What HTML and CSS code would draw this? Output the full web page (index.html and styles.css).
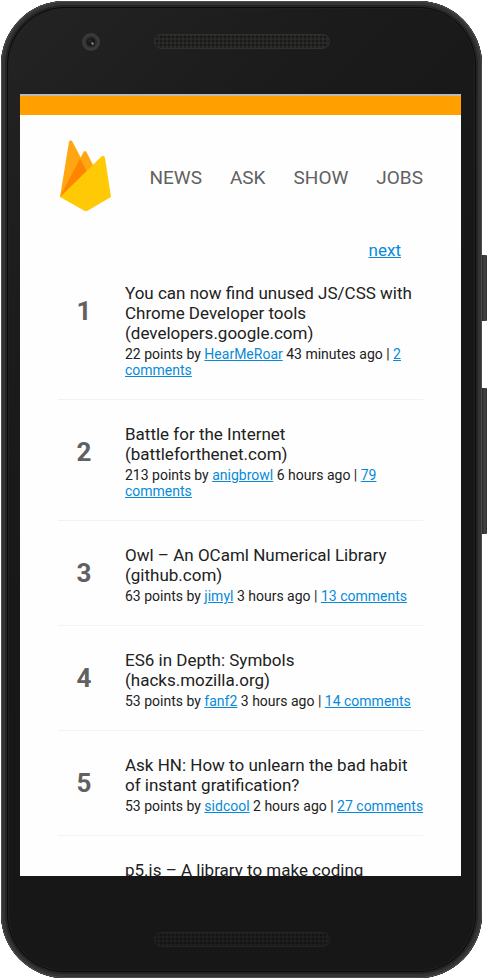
FILE: index.html
```html
<!DOCTYPE html>
<html lang="en">
<head>
<meta charset="utf-8">
<meta name="viewport" content="width=device-width, initial-scale=1">
<title>Hacker News</title>
<link rel="stylesheet" href="styles.css">
</head>
<body>
<div class="device">
  <div class="side-button power"></div>
  <div class="side-button volume"></div>
  <div class="phone">
    <div class="bezel bezel-top">
      <svg class="camera" viewBox="0 0 18 18" aria-hidden="true">
        <circle cx="9" cy="9" r="9" fill="#3a3a3a"/>
        <circle cx="9" cy="9" r="6" fill="#2c2c2d"/>
        <circle cx="9" cy="9" r="4" fill="#151516"/>
        <circle cx="8" cy="8" r="2" fill="#252528"/>
        <circle cx="10.5" cy="10.5" r="1.2" fill="#8d8d8d"/>
      </svg>
      <div class="speaker"></div>
    </div>
    <div class="screen">
      <div class="status-bar"></div>
      <header class="header">
        <a class="logo" href="#" aria-label="Home">
          <svg viewBox="0 0 52 72" aria-hidden="true">
            <path d="M0 57 9 2Q10-1 12 1L30 35Z" fill="#ffa611"/>
            <path d="M0 57 23 13Q25 9 27 13L36 31Z" fill="#ffa611"/>
            <path d="M0 57 20 19 28 34 0 57Z" fill="#ff8b00"/>
            <path d="M0 57 20 19 25 28 28 34Z" fill="#ff8400"/>
            <path d="M0 57 41 17Q44 14 45 18L51 57 28 70.500Q26 71.500 24 70.500Z" fill="#ffca05"/>
          </svg>
        </a>
        <nav class="nav">
          <a href="#">NEWS</a>
          <a href="#">ASK</a>
          <a href="#">SHOW</a>
          <a href="#">JOBS</a>
        </nav>
      </header>
      <main>
        <div class="pager"><a href="#">next</a></div>
        <ol class="stories">
          <li class="story">
            <span class="rank">1</span>
            <div>
              <h2>You can now find unused JS/CSS with Chrome Developer tools (developers.google.com)</h2>
              <p>22 points by <a href="#">HearMeRoar</a> 43 minutes ago | <a href="#">2 comments</a></p>
            </div>
          </li>
          <li class="story">
            <span class="rank">2</span>
            <div>
              <h2>Battle for the Internet (battleforthenet.com)</h2>
              <p>213 points by <a href="#">anigbrowl</a> 6 hours ago | <a href="#">79 comments</a></p>
            </div>
          </li>
          <li class="story">
            <span class="rank">3</span>
            <div>
              <h2>Owl – An OCaml Numerical Library (github.com)</h2>
              <p>63 points by <a href="#">jimyl</a> 3 hours ago | <a href="#">13 comments</a></p>
            </div>
          </li>
          <li class="story">
            <span class="rank">4</span>
            <div>
              <h2>ES6 in Depth: Symbols (hacks.mozilla.org)</h2>
              <p>53 points by <a href="#">fanf2</a> 3 hours ago | <a href="#">14 comments</a></p>
            </div>
          </li>
          <li class="story">
            <span class="rank">5</span>
            <div>
              <h2>Ask HN: How to unlearn the bad habit of instant gratification?</h2>
              <p>53 points by <a href="#">sidcool</a> 2 hours ago | <a href="#">27 comments</a></p>
            </div>
          </li>
          <li class="story">
            <span></span>
            <div>
              <h2>p5.js – A library to make coding</h2>
            </div>
          </li>
        </ol>
      </main>
    </div>
    <div class="bezel bezel-bottom">
      <div class="speaker speaker-dim"></div>
    </div>
  </div>
</div>
</body>
</html>
```
FILE: styles.css
```css
* {
  box-sizing: border-box;
}

body {
  margin: 0;
  background: #fff;
  color: #212121;
  font-family: Roboto, "Liberation Sans", sans-serif;
}

a {
  color: #078bd8;
}

.device {
  position: relative;
  height: 100vh;
  padding: 1px 5px 2px 1px;
}

.side-button {
  position: absolute;
  right: 0;
  width: 8px;
  border-radius: 1px;
  background: linear-gradient(90deg, #2b2b2b 40%, #444, #303030);
}

.power {
  top: 255px;
  height: 66px;
}

.volume {
  top: 388px;
  height: 146px;
}

.phone {
  position: relative;
  display: flex;
  flex-direction: column;
  height: 100%;
  padding: 0 21px 0 19px;
  border-radius: 64px;
  background: linear-gradient(135deg, #242424, #1b1b1b 25%, #171717 50%);
  box-shadow:
    inset 0 0 0 1px #4a4d4b,
    inset 0 0 0 4px #333534,
    inset 0 0 0 6px #232423,
    inset 0 0 0 7px #0c0c0c,
    inset 0 0 0 8px #202020;
}

.bezel {
  display: grid;
  grid-template-columns: 1fr 176px 1fr;
  align-items: center;
  flex: none;
  padding-left: 3px;
}

.bezel-top {
  height: 93px;
  padding-bottom: 12px;
}

.bezel-bottom {
  height: 102px;
  padding-top: 24px;
}

.camera {
  width: 18px;
  height: 18px;
  margin-left: 4px;
  justify-self: center;
}

.speaker {
  grid-column: 2;
  height: 15px;
  border: 1px solid #313131;
  border-radius: 8px;
  background: radial-gradient(circle, #191919 1px, #2c2c2b 2px) 0 0 / 4px 4px;
}

.speaker-dim {
  border-color: #242424;
  background: radial-gradient(circle, #141414 1px, #202020 2px) 0 0 / 4px 4px;
}

.screen {
  flex: 1;
  min-height: 0;
  overflow: hidden;
  background: #fefefe;
}

.status-bar {
  height: 21px;
  border-top: 2px solid #bdb9bb;
  background: #ffa000;
}

.header {
  display: flex;
  align-items: center;
  justify-content: space-between;
  padding: 25px 38px 0 40px;
}

.logo,
.logo svg {
  display: block;
  width: 52px;
  height: 72px;
}

.nav {
  display: flex;
  gap: 28px;
  padding-top: 4px;
  font-size: 19px;
  line-height: 24px;
}

.nav a {
  color: #616161;
  text-decoration: none;
}

.pager {
  padding: 29px 60px 0 0;
  font-size: 17px;
  line-height: 18px;
  text-align: right;
}

.stories {
  margin: 0;
  padding: 0 38px;
  list-style: none;
}

.story {
  display: grid;
  grid-template-columns: 52px 1fr;
  column-gap: 15px;
  align-items: start;
  padding: 24px 0 21px;
  border-bottom: 1px solid #f2f2f2;
}

.rank {
  padding-top: 13px;
  color: #616161;
  font-size: 26px;
  font-weight: 700;
  line-height: 30px;
  text-align: center;
}

.story h2 {
  margin: 0;
  font-size: 17px;
  font-weight: 400;
  line-height: 20px;
}

.story p {
  margin: 3px -8px 0 0;
  font-size: 14px;
  line-height: 16px;
}
```
